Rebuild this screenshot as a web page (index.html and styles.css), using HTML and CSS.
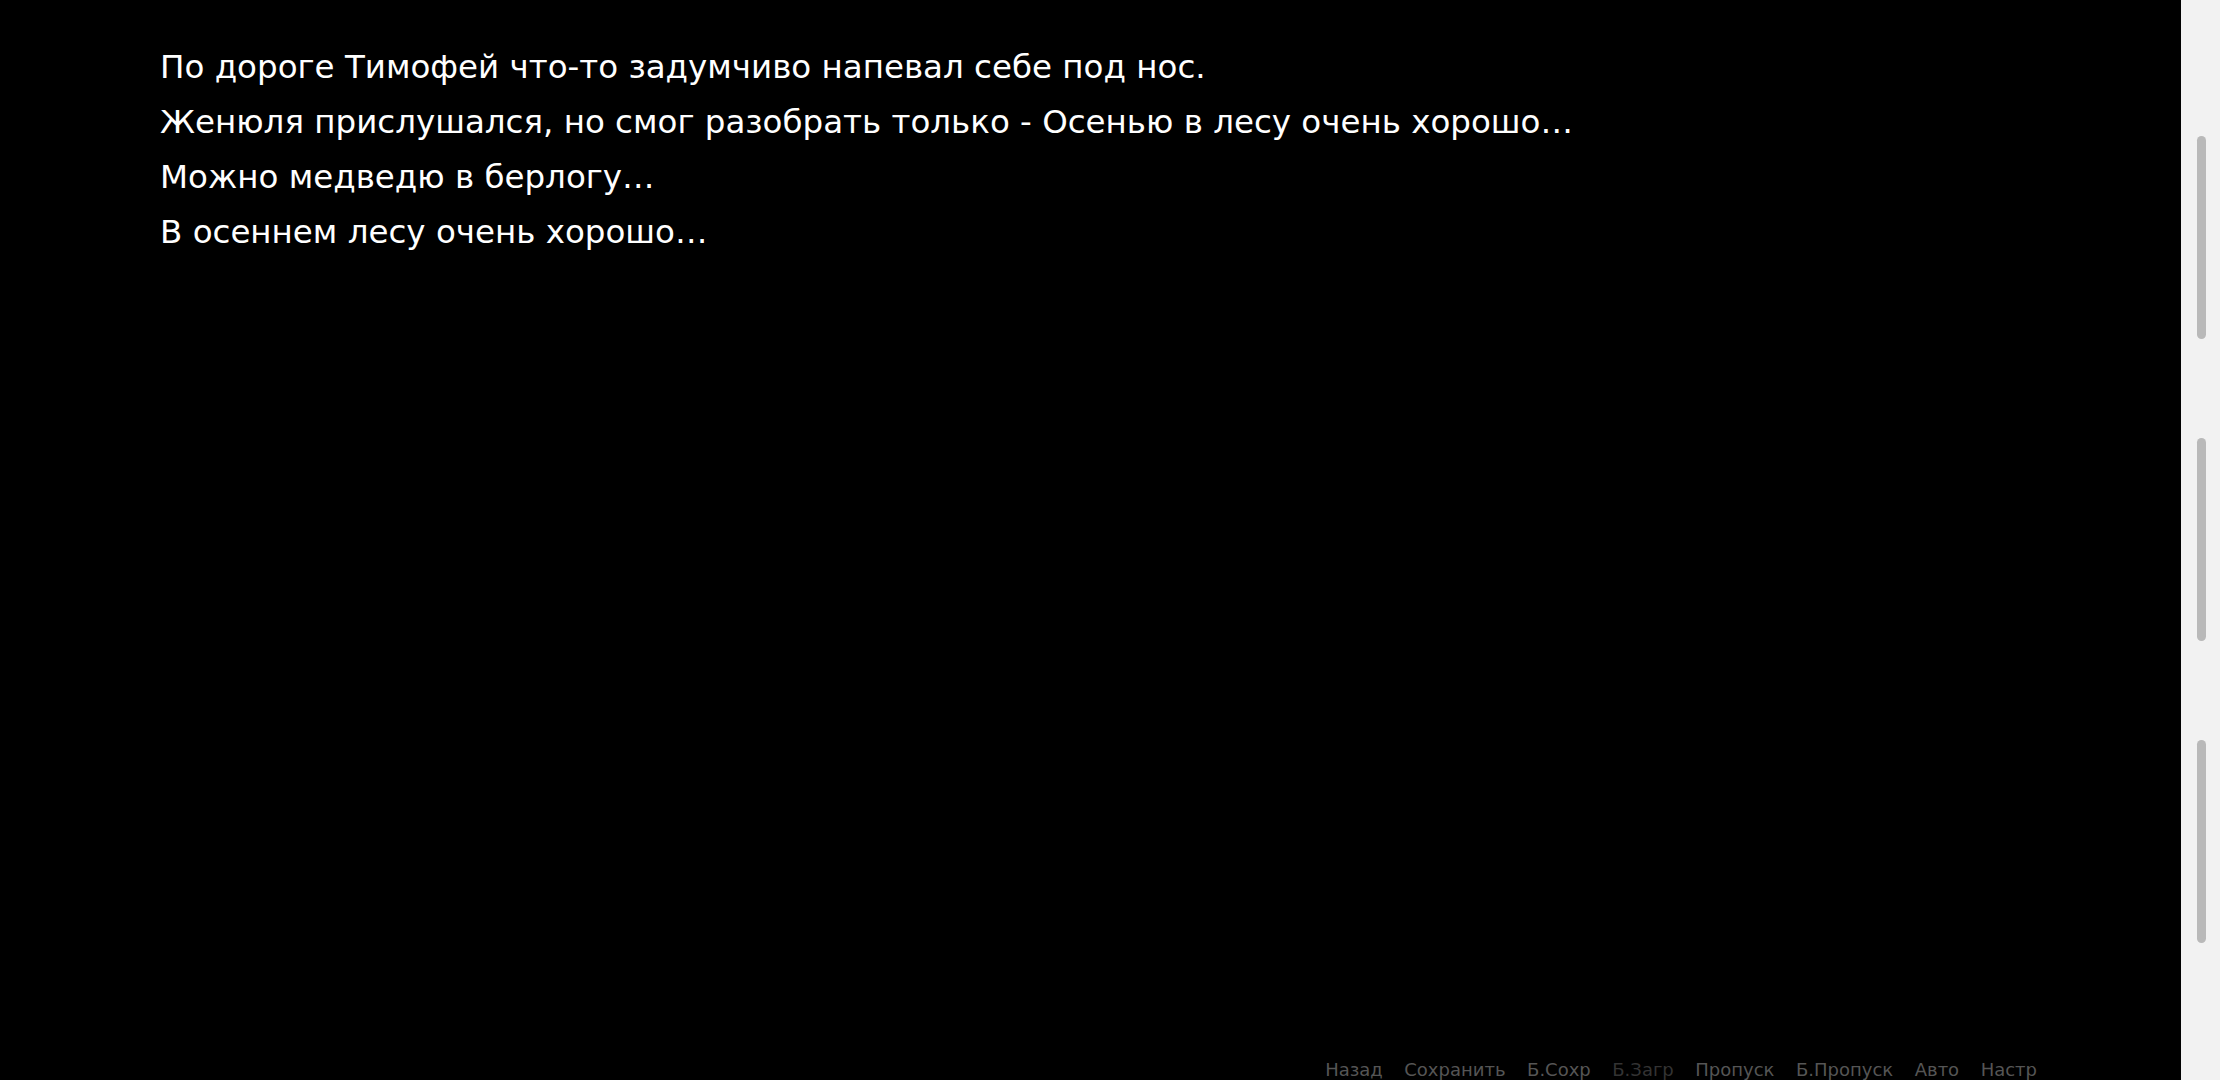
FILE: index.html
```html
<!DOCTYPE html>
<html lang="ru">
<head>
<meta charset="utf-8">
<title>Novel</title>
<link rel="stylesheet" href="styles.css">
</head>
<body>
<div class="app">
  <main class="stage">
    <div class="history">
      <p class="line">По дороге Тимофей что-то задумчиво напевал себе под нос.</p>
      <p class="line">Женюля прислушался, но смог разобрать только - Осенью в лесу очень хорошо…</p>
      <p class="line">Можно медведю в берлогу…</p>
      <p class="line">В осеннем лесу очень хорошо…</p>
    </div>
    <nav class="menu">
      <span class="item">Назад</span>
      <span class="item">Сохранить</span>
      <span class="item">Б.Сохр</span>
      <span class="item disabled">Б.Загр</span>
      <span class="item">Пропуск</span>
      <span class="item">Б.Пропуск</span>
      <span class="item">Авто</span>
      <span class="item">Настр</span>
    </nav>
  </main>
  <aside class="rail">
    <div class="pill"></div>
    <div class="pill"></div>
    <div class="pill"></div>
  </aside>
</div>
</body>
</html>
```
FILE: styles.css
```css
html, body {
  margin: 0;
  padding: 0;
  height: 100%;
  background: #000;
  overflow: hidden;
}
.app {
  display: flex;
  height: 1080px;
  font-family: "DejaVu Sans", sans-serif;
}
.stage {
  flex: 1;
  display: flex;
  flex-direction: column;
  justify-content: space-between;
  background: #000;
}
.history {
  padding: 40px 0 0 160px;
}
.line {
  margin: 0;
  color: #fff;
  font-size: 32.5px;
  line-height: 55px;
  white-space: nowrap;
}
.menu {
  display: flex;
  justify-content: flex-end;
  gap: 21.5px;
  padding: 0 144px 0 0;
  height: 20px;
  align-items: flex-end;
}
.item {
  color: #555;
  font-size: 18px;
  line-height: 20px;
}
.item.disabled {
  color: #333;
}
.rail {
  width: 39px;
  background: #f2f2f2;
  display: flex;
  flex-direction: column;
  align-items: center;
  padding-top: 136px;
  gap: 99px;
  box-sizing: border-box;
}
.pill {
  width: 9px;
  height: 203px;
  border-radius: 5px;
  background: #b9b9b9;
  margin-left: 2px;
}
```
